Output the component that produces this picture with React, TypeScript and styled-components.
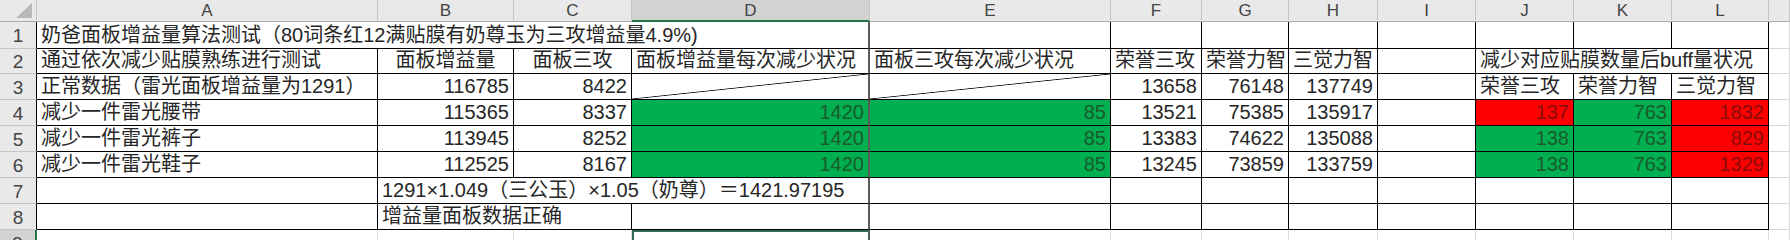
import React from "react";
import styled, { createGlobalStyle, css } from "styled-components";

const GlobalStyle = createGlobalStyle`
  html, body {
    margin: 0;
    padding: 0;
    background: #ffffff;
    overflow: hidden;
  }
  body {
    font-family: "Liberation Sans", "Noto Sans CJK SC", sans-serif;
  }
`;

const COL_WIDTHS = [37, 341, 136, 118, 238, 241, 91, 87, 89, 98, 98, 98, 97, 21];
const ROW_HEIGHTS = [22, 27, 25, 26, 26, 26, 26, 26, 26, 26];
const LETTERS = ["A", "B", "C", "D", "E", "F", "G", "H", "I", "J", "K", "L", ""];
const ACTIVE_COL = 3;
const ACTIVE_ROW = 9;

type Fill = "green" | "red";
type Align = "left" | "right" | "center";

interface CellSpec {
  text?: string;
  span?: number;
  align?: Align;
  fill?: Fill;
  diag?: boolean;
}

const Sheet = styled.div`
  display: grid;
  grid-template-columns: ${COL_WIDTHS.map((w) => `${w}px`).join(" ")};
  grid-template-rows: ${ROW_HEIGHTS.map((h) => `${h}px`).join(" ")};
  width: 1790px;
  height: 240px;
  overflow: hidden;
  background: #fff;
  color: #262626;
`;

const Corner = styled.div`
  position: relative;
  background: #e9e9e9;
  border-right: 1px solid #c6c6c6;
  border-bottom: 1px solid #ababab;
  box-sizing: border-box;

  &::after {
    content: "";
    position: absolute;
    right: 4px;
    bottom: 3px;
    width: 16px;
    height: 15px;
    background: #b8b8b8;
    clip-path: polygon(100% 0, 100% 100%, 0 100%);
  }
`;

const ColHeader = styled.div<{ $active?: boolean }>`
  display: flex;
  align-items: center;
  justify-content: center;
  box-sizing: border-box;
  background: ${(p) => (p.$active ? "#d2d2d2" : "#e9e9e9")};
  border-right: 1px solid #c6c6c6;
  border-bottom: ${(p) => (p.$active ? "2px solid #217346" : "1px solid #ababab")};
  font-family: "Liberation Sans", sans-serif;
  font-size: 17px;
  color: #444;
  padding-top: 1px;
`;

const RowHeader = styled.div<{ $active?: boolean; $boxed?: boolean }>`
  display: flex;
  align-items: center;
  justify-content: center;
  box-sizing: border-box;
  background: ${(p) => (p.$active ? "#d2d2d2" : "#e9e9e9")};
  border-bottom: 1px solid #c6c6c6;
  border-right: ${(p) =>
    p.$active ? "2px solid #217346" : p.$boxed ? "1px solid #000" : "1px solid #c6c6c6"};
  font-family: "Liberation Sans", sans-serif;
  font-size: 19px;
  color: #444;
  padding-top: 2px;
`;

const fills: Record<Fill, { bg: string; fg: string }> = {
  green: { bg: "#00b050", fg: "#1b5a2c" },
  red: { bg: "#ff0000", fg: "#8a0b0b" },
};

const Cell = styled.div<{
  $span?: number;
  $align?: Align;
  $fill?: Fill;
  $diag?: boolean;
  $boxed?: boolean;
  $thickRight?: boolean;
  $selected?: boolean;
}>`
  grid-column: span ${(p) => p.$span ?? 1};
  display: flex;
  align-items: flex-end;
  justify-content: ${(p) =>
    p.$align === "right" ? "flex-end" : p.$align === "center" ? "center" : "flex-start"};
  box-sizing: border-box;
  padding: 0 4px 1px 4px;
  white-space: nowrap;
  overflow: hidden;
  font-size: 20px;
  line-height: 24px;
  background: ${(p) => (p.$fill ? fills[p.$fill].bg : "#fff")};
  color: ${(p) => (p.$fill ? fills[p.$fill].fg : "#262626")};
  border-right: 1px solid ${(p) => (p.$boxed ? "#000" : "#d9d9d9")};
  border-bottom: 1px solid ${(p) => (p.$boxed ? "#000" : "#d9d9d9")};

  ${(p) =>
    p.$thickRight &&
    css`
      border-right: 2px solid #5c5c5c;
    `}

  ${(p) =>
    p.$diag &&
    css`
      background: linear-gradient(
        to bottom right,
        transparent calc(50% - 0.8px),
        #111 50%,
        transparent calc(50% + 0.8px)
      );
    `}

  ${(p) =>
    p.$selected &&
    css`
      border-right: 2px solid #4b5f58;
      box-shadow: inset 2px 2px 0 #2f6b55;
    `}
`;

const rows: CellSpec[][] = [
  [
    { text: "奶爸面板增益量算法测试（80词条红12满贴膜有奶尊玉为三攻增益量4.9%)", span: 4 },
    {}, {}, {}, {}, {}, {}, {}, {},
  ],
  [
    { text: "通过依次减少贴膜熟练进行测试" },
    { text: "面板增益量", align: "center" },
    { text: "面板三攻", align: "center" },
    { text: "面板增益量每次减少状况" },
    { text: "面板三攻每次减少状况" },
    { text: "荣誉三攻" },
    { text: "荣誉力智" },
    { text: "三觉力智" },
    {},
    { text: "减少对应贴膜数量后buff量状况", span: 3 },
  ],
  [
    { text: "正常数据（雷光面板增益量为1291）" },
    { text: "116785", align: "right" },
    { text: "8422", align: "right" },
    { diag: true },
    { diag: true },
    { text: "13658", align: "right" },
    { text: "76148", align: "right" },
    { text: "137749", align: "right" },
    {},
    { text: "荣誉三攻" },
    { text: "荣誉力智" },
    { text: "三觉力智" },
  ],
  [
    { text: "减少一件雷光腰带" },
    { text: "115365", align: "right" },
    { text: "8337", align: "right" },
    { text: "1420", align: "right", fill: "green" },
    { text: "85", align: "right", fill: "green" },
    { text: "13521", align: "right" },
    { text: "75385", align: "right" },
    { text: "135917", align: "right" },
    {},
    { text: "137", align: "right", fill: "red" },
    { text: "763", align: "right", fill: "green" },
    { text: "1832", align: "right", fill: "red" },
  ],
  [
    { text: "减少一件雷光裤子" },
    { text: "113945", align: "right" },
    { text: "8252", align: "right" },
    { text: "1420", align: "right", fill: "green" },
    { text: "85", align: "right", fill: "green" },
    { text: "13383", align: "right" },
    { text: "74622", align: "right" },
    { text: "135088", align: "right" },
    {},
    { text: "138", align: "right", fill: "green" },
    { text: "763", align: "right", fill: "green" },
    { text: "829", align: "right", fill: "red" },
  ],
  [
    { text: "减少一件雷光鞋子" },
    { text: "112525", align: "right" },
    { text: "8167", align: "right" },
    { text: "1420", align: "right", fill: "green" },
    { text: "85", align: "right", fill: "green" },
    { text: "13245", align: "right" },
    { text: "73859", align: "right" },
    { text: "133759", align: "right" },
    {},
    { text: "138", align: "right", fill: "green" },
    { text: "763", align: "right", fill: "green" },
    { text: "1329", align: "right", fill: "red" },
  ],
  [
    {},
    { text: "1291×1.049（三公玉）×1.05（奶尊）＝1421.97195", span: 3 },
    {}, {}, {}, {}, {}, {}, {}, {},
  ],
  [
    {},
    { text: "增益量面板数据正确", span: 2 },
    {}, {}, {}, {}, {}, {}, {}, {}, {},
  ],
];

// column index (0 = A) each spec starts and ends at, so the D edge can be found
const withStart = (row: CellSpec[]) => {
  let col = 0;
  return row.map((spec) => {
    const start = col;
    col += spec.span ?? 1;
    return { spec, start, end: col - 1 };
  });
};

const App: React.FC = () => {
  return (
    <>
      <GlobalStyle />
      <Sheet>
        <Corner />
        {LETTERS.map((l, i) => (
          <ColHeader key={`h${i}`} $active={i === ACTIVE_COL}>
            {l}
          </ColHeader>
        ))}

        {rows.map((row, r) => (
          <React.Fragment key={`r${r}`}>
            <RowHeader $boxed>{r + 1}</RowHeader>
            {withStart(row).map(({ spec, start, end }) => (
              <Cell
                key={`c${r}-${start}`}
                $span={spec.span}
                $align={spec.align}
                $fill={spec.fill}
                $diag={spec.diag}
                $boxed
                $thickRight={end === ACTIVE_COL}
              >
                {spec.text}
              </Cell>
            ))}
            <Cell />
          </React.Fragment>
        ))}

        <RowHeader $active>{ACTIVE_ROW}</RowHeader>
        {LETTERS.map((_, i) => (
          <Cell key={`e-${i}`} $selected={i === ACTIVE_COL} />
        ))}
      </Sheet>
    </>
  );
};

export default App;
